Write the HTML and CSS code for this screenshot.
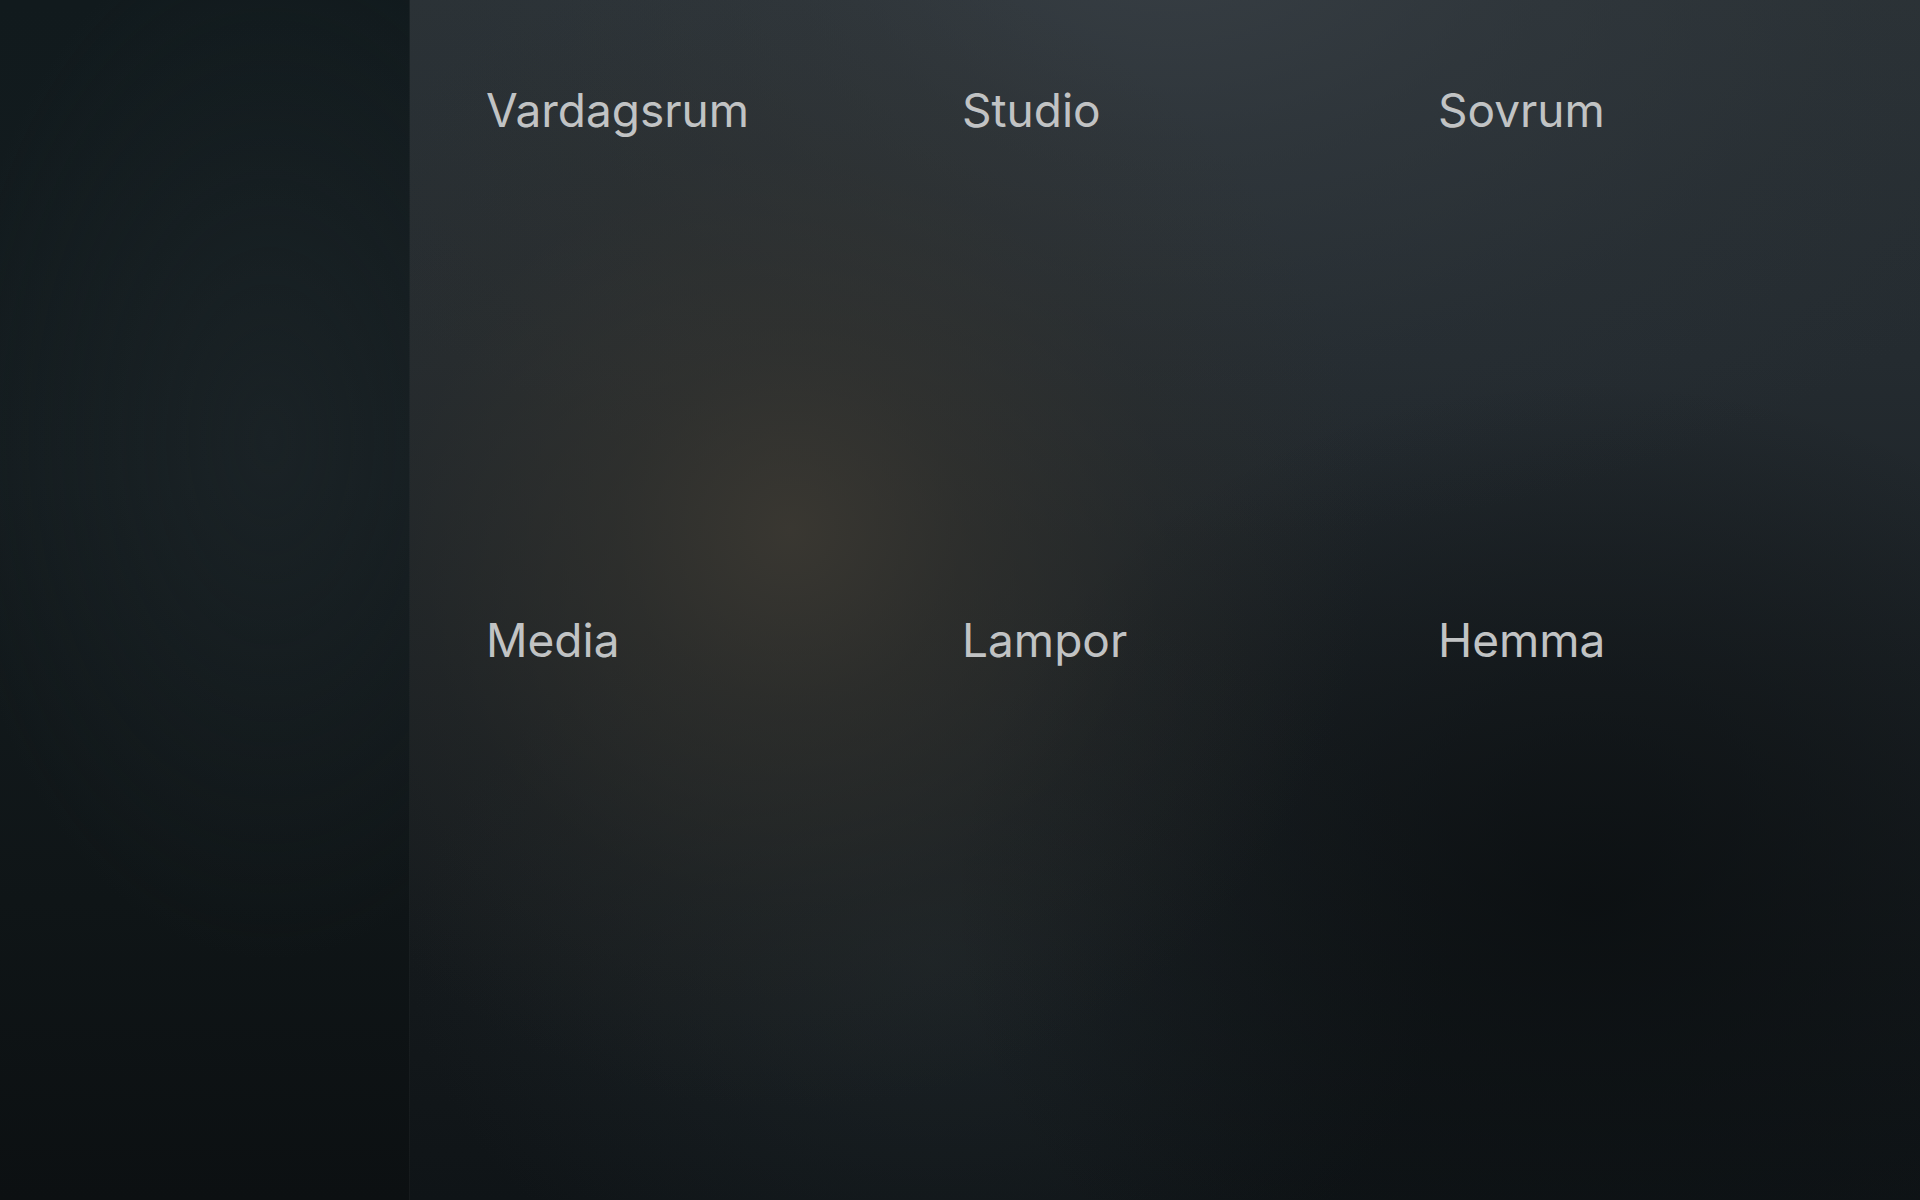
FILE: index.html
```html
<!DOCTYPE html>
<html lang="sv">
<head>
<meta charset="utf-8">
<title>Hem</title>
<link rel="stylesheet" href="styles.css">
</head>
<body>
<div class="app">
  <aside class="sidebar"></aside>
  <main class="rooms">
    <section class="room"><h2 class="room-title">Vardagsrum</h2></section>
    <section class="room"><h2 class="room-title">Studio</h2></section>
    <section class="room"><h2 class="room-title">Sovrum</h2></section>
    <section class="room"><h2 class="room-title">Media</h2></section>
    <section class="room"><h2 class="room-title">Lampor</h2></section>
    <section class="room"><h2 class="room-title">Hemma</h2></section>
  </main>
</div>
</body>
</html>
```

FILE: styles.css
```css
html, body {
  margin: 0;
  padding: 0;
  height: 100%;
  background: #0e1315;
}
body {
  font-family: Inter, "Noto Sans", "Liberation Sans", sans-serif;
}
.app {
  display: flex;
  width: 1920px;
  height: 1200px;
  overflow: hidden;
}
.sidebar {
  flex: 0 0 409px;
  border-right: 1px solid rgba(255, 255, 255, 0.045);
  background:
    radial-gradient(ellipse 320px 520px at 270px 440px, rgba(32, 40, 44, 0.5), rgba(32, 40, 44, 0) 100%),
    linear-gradient(to bottom, #111a1d 0%, #141c1f 40%, #0f1517 75%, #0c1012 100%);
}
.rooms {
  flex: 1;
  box-sizing: border-box;
  padding: 83px 0 0 76px;
  display: grid;
  grid-template-columns: repeat(3, 476px);
  grid-auto-rows: 530px;
  align-content: start;
  background:
    radial-gradient(ellipse 580px 580px at 380px 530px, rgba(60, 57, 50, 0.9), rgba(54, 52, 46, 0.6) 30%, rgba(48, 47, 42, 0.25) 65%, rgba(40, 40, 36, 0) 100%),
    radial-gradient(ellipse 1000px 600px at 760px -60px, rgba(56, 63, 69, 0.9), rgba(52, 59, 65, 0.55) 35%, rgba(48, 55, 61, 0.2) 70%, rgba(45, 52, 58, 0) 100%),
    radial-gradient(ellipse 640px 520px at 1180px 900px, rgba(10, 14, 16, 0.8), rgba(10, 14, 16, 0.35) 55%, rgba(10, 14, 16, 0) 100%),
    radial-gradient(ellipse 520px 380px at 520px 960px, rgba(33, 41, 45, 0.6), rgba(33, 41, 45, 0) 100%),
    linear-gradient(to bottom, #2a3135 0%, #242b30 30%, #1c2226 55%, #14191c 80%, #0f1417 100%);
}
.room {
  min-width: 0;
}
.room-title {
  margin: 0;
  font-size: 46px;
  line-height: 55px;
  font-weight: 400;
  color: #c1c3c4;
  letter-spacing: 0;
}
```
